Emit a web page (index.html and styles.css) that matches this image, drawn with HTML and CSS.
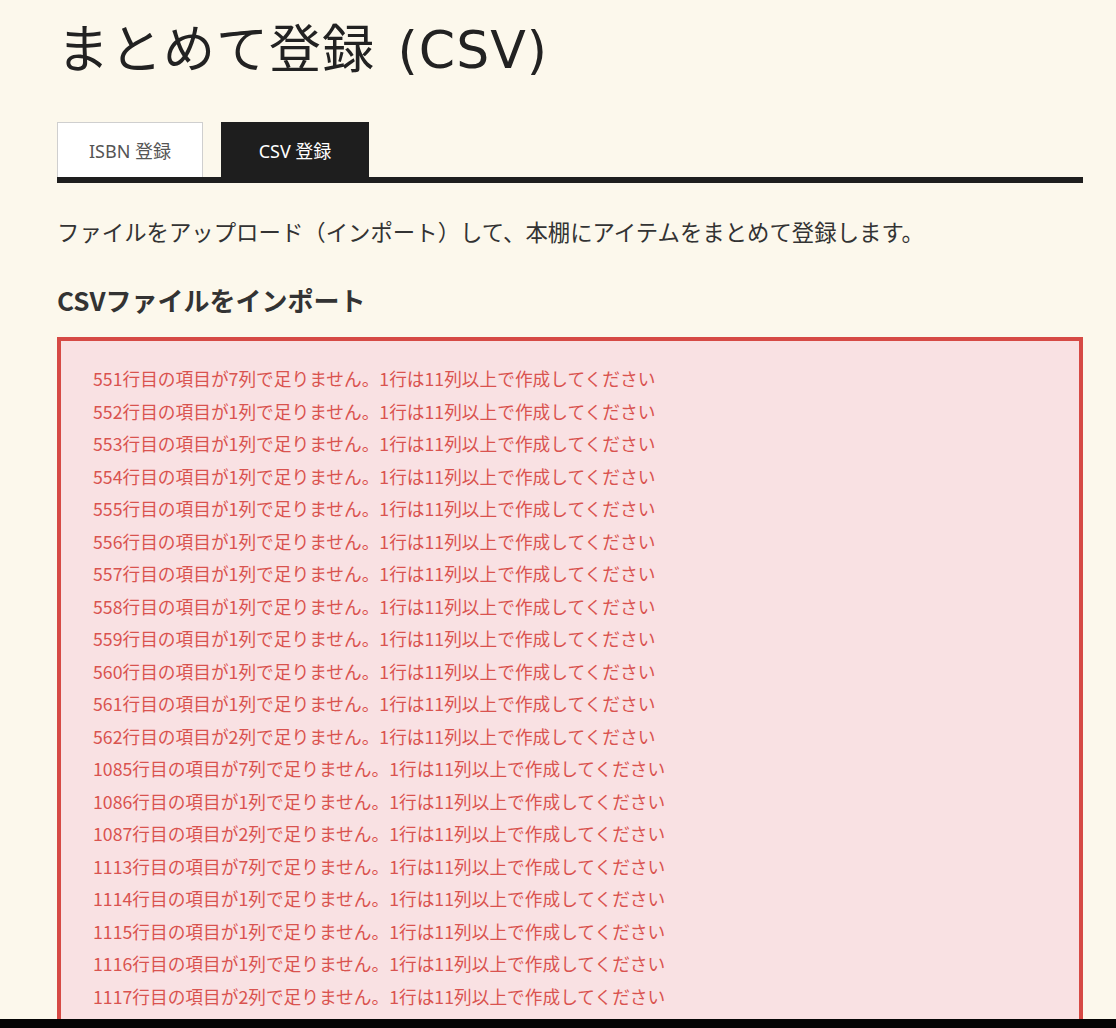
FILE: index.html
```html
<!DOCTYPE html>
<html lang="ja">
<head>
<meta charset="utf-8">
<title>まとめて登録 (CSV)</title>
<link rel="stylesheet" href="styles.css">
</head>
<body>
<main class="page">
  <h1 class="title">まとめて登録 (CSV)</h1>
  <nav class="tabs">
    <a class="tab tab-isbn">ISBN 登録</a>
    <a class="tab tab-csv is-active">CSV 登録</a>
  </nav>
  <p class="intro">ファイルをアップロード（インポート）して、本棚にアイテムをまとめて登録します。</p>
  <h2 class="section-title">CSVファイルをインポート</h2>
  <div class="error-box">
    <p class="error-line">551行目の項目が7列で足りません。1行は11列以上で作成してください</p>
    <p class="error-line">552行目の項目が1列で足りません。1行は11列以上で作成してください</p>
    <p class="error-line">553行目の項目が1列で足りません。1行は11列以上で作成してください</p>
    <p class="error-line">554行目の項目が1列で足りません。1行は11列以上で作成してください</p>
    <p class="error-line">555行目の項目が1列で足りません。1行は11列以上で作成してください</p>
    <p class="error-line">556行目の項目が1列で足りません。1行は11列以上で作成してください</p>
    <p class="error-line">557行目の項目が1列で足りません。1行は11列以上で作成してください</p>
    <p class="error-line">558行目の項目が1列で足りません。1行は11列以上で作成してください</p>
    <p class="error-line">559行目の項目が1列で足りません。1行は11列以上で作成してください</p>
    <p class="error-line">560行目の項目が1列で足りません。1行は11列以上で作成してください</p>
    <p class="error-line">561行目の項目が1列で足りません。1行は11列以上で作成してください</p>
    <p class="error-line">562行目の項目が2列で足りません。1行は11列以上で作成してください</p>
    <p class="error-line">1085行目の項目が7列で足りません。1行は11列以上で作成してください</p>
    <p class="error-line">1086行目の項目が1列で足りません。1行は11列以上で作成してください</p>
    <p class="error-line">1087行目の項目が2列で足りません。1行は11列以上で作成してください</p>
    <p class="error-line">1113行目の項目が7列で足りません。1行は11列以上で作成してください</p>
    <p class="error-line">1114行目の項目が1列で足りません。1行は11列以上で作成してください</p>
    <p class="error-line">1115行目の項目が1列で足りません。1行は11列以上で作成してください</p>
    <p class="error-line">1116行目の項目が1列で足りません。1行は11列以上で作成してください</p>
    <p class="error-line">1117行目の項目が2列で足りません。1行は11列以上で作成してください</p>
  </div>
</main>
<div class="bottom-bar"></div>
</body>
</html>
```

FILE: styles.css
```css
* { box-sizing: border-box; }

html, body {
  margin: 0;
  padding: 0;
  background: #fcf8ec;
}

body {
  font-family: "Noto Sans CJK JP", "Noto Sans", sans-serif;
  color: #333;
  overflow: hidden;
}

.page {
  width: 1026px;
  margin-left: 57px;
}

.title {
  margin: 19px 0 0;
  font-family: "DejaVu Sans", "Noto Sans CJK JP", sans-serif;
  font-size: 52px;
  line-height: 62px;
  font-weight: 400;
  letter-spacing: 1px;
  word-spacing: 5px;
  color: #222;
}

.tabs {
  display: flex;
  gap: 18px;
  margin-top: 41px;
  border-bottom: 6px solid #1e1e1e;
}

.tab {
  display: flex;
  align-items: center;
  justify-content: center;
  height: 55px;
  font-family: "Noto Sans", "Noto Sans CJK JP", sans-serif;
  font-size: 18px;
  color: #555;
}

.tab-isbn {
  width: 146px;
  background: #fff;
  border: 1px solid #cfcfcf;
  border-bottom: none;
}

.tab-csv {
  width: 148px;
}

.tab.is-active {
  background: #1e1e1e;
  color: #fff;
}

.intro {
  margin: 32px 0 0;
  font-size: 22.4px;
  line-height: 33px;
  color: #333;
}

.section-title {
  margin: 34px 0 0;
  font-size: 26px;
  line-height: 36px;
  font-weight: 700;
  color: #333;
}

.error-box {
  margin-top: 19px;
  border: 4px solid #d64a45;
  background: #f9e1e3;
  padding: 21px 30px 22px 32px;
}

.error-line {
  margin: 0;
  font-size: 17.7px;
  line-height: 32.5px;
  color: #d9534f;
}

.bottom-bar {
  position: fixed;
  left: 0;
  right: 0;
  bottom: 0;
  height: 9px;
  background: #050505;
}
```
